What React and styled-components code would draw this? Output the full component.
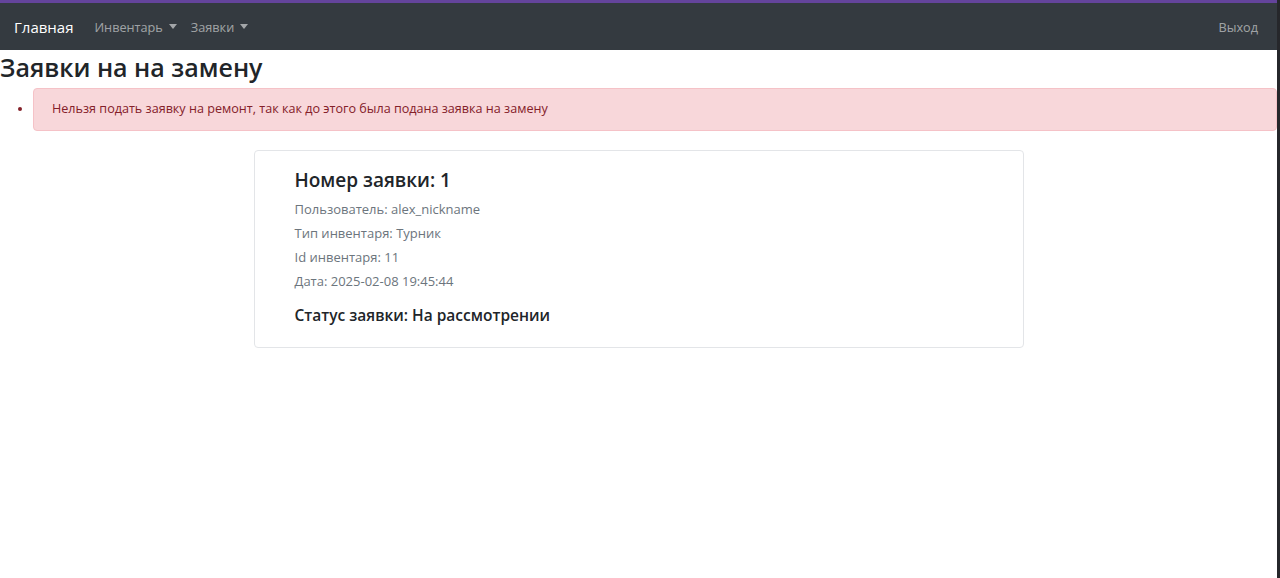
import styled, { createGlobalStyle } from "styled-components";

const GlobalStyle = createGlobalStyle`
  html {
    background: #26272b;
  }
  body {
    margin: 0;
    width: calc(100% - 3px);
    min-height: 578px;
    background: #fff;
    font-family: "Open Sans", "Noto Sans", sans-serif;
    color: #212529;
  }
  * {
    box-sizing: border-box;
  }
`;

const TopLine = styled.div`
  height: 3px;
  background: #64449c;
`;

const Navbar = styled.nav`
  display: flex;
  align-items: center;
  height: 47px;
  padding: 0 19px 0 14px;
  background: #343a40;
`;

const Brand = styled.a`
  font-size: 15px;
  color: #fff;
  margin-right: 21px;
`;

const NavLink = styled.a`
  display: flex;
  align-items: center;
  font-size: 12.7px;
  color: rgba(255, 255, 255, 0.55);
  margin-right: ${(p) => (p.$last ? "0" : "14px")};
  margin-left: ${(p) => (p.$right ? "auto" : "0")};

  &::after {
    content: ${(p) => (p.$caret ? '""' : "none")};
    margin-left: 6px;
    border-top: 5px solid rgba(255, 255, 255, 0.55);
    border-left: 4px solid transparent;
    border-right: 4px solid transparent;
  }
`;

const Title = styled.h3`
  margin: 2px 0 6px;
  font-size: 25px;
  font-weight: 600;
  line-height: 1.2;
`;

const Errors = styled.ul`
  margin: 0 0 19px;
  padding-left: 33px;
  color: #842029;
`;

const Alert = styled.li`
  padding: 10px 18px 11px;
  font-size: 12.6px;
  line-height: 20px;
  background: #f8d7da;
  border: 1px solid #f5c2c7;
  border-radius: 4px;

  &::marker {
    color: #842029;
  }
`;

const Card = styled.div`
  width: 770px;
  margin: 0 auto;
  padding: 18px 40px 23px;
  border: 1px solid #e3e5e8;
  border-radius: 4px;
`;

const CardTitle = styled.h5`
  margin: 0 0 5px;
  font-size: 19px;
  font-weight: 600;
  line-height: 1.2;
`;

const Field = styled.p`
  margin: 0;
  font-size: 13px;
  line-height: 24px;
  color: #6c757d;
`;

const Status = styled.h6`
  margin: 13px 0 0;
  font-size: 15.5px;
  font-weight: 600;
  line-height: 1.2;
`;

const fields = [
  "Пользователь: alex_nickname",
  "Тип инвентаря: Турник",
  "Id инвентаря: 11",
  "Дата: 2025-02-08 19:45:44",
];

export default function App() {
  return (
    <>
      <GlobalStyle />
      <TopLine />
      <Navbar>
        <Brand>Главная</Brand>
        <NavLink $caret>Инвентарь</NavLink>
        <NavLink $caret>Заявки</NavLink>
        <NavLink $right $last>
          Выход
        </NavLink>
      </Navbar>
      <Title>Заявки на на замену</Title>
      <Errors>
        <Alert>
          Нельзя подать заявку на ремонт, так как до этого была подана заявка на
          замену
        </Alert>
      </Errors>
      <Card>
        <CardTitle>Номер заявки: 1</CardTitle>
        {fields.map((f) => (
          <Field key={f}>{f}</Field>
        ))}
        <Status>Статус заявки: На рассмотрении</Status>
      </Card>
    </>
  );
}
